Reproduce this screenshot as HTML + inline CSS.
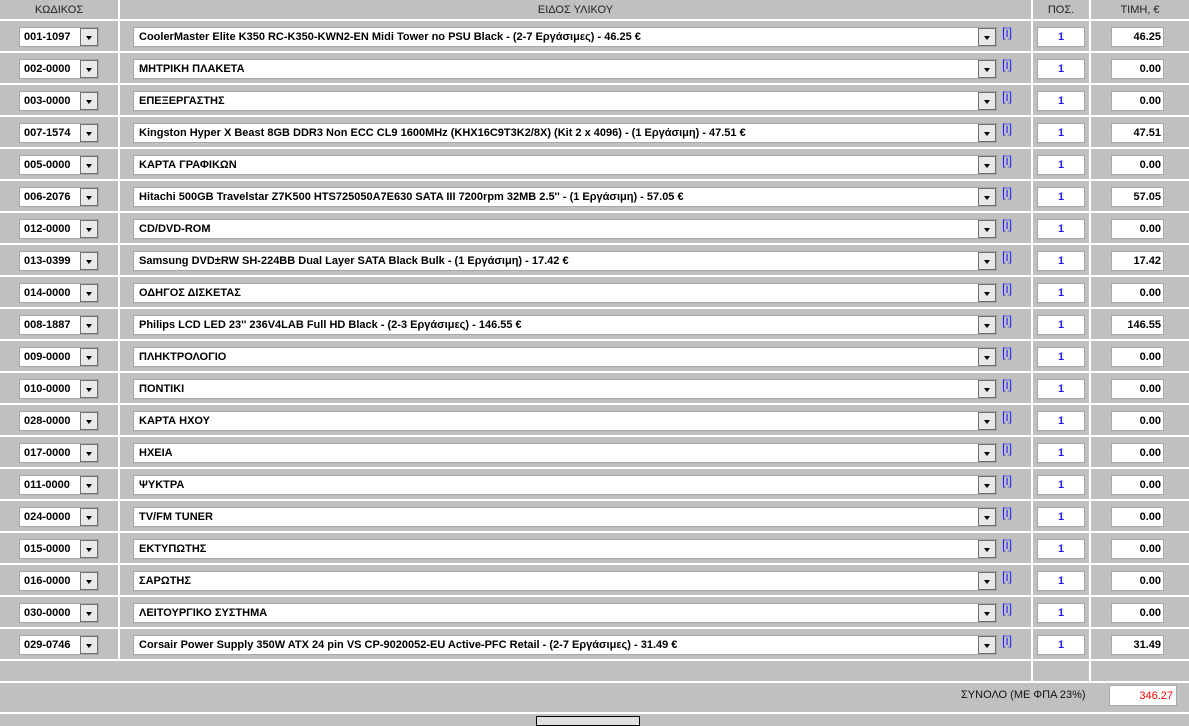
<!DOCTYPE html>
<html><head><meta charset="utf-8">
<style>
*{margin:0;padding:0;box-sizing:border-box}
body{width:1189px;height:719px;background:#c0c0c0;position:relative;overflow:hidden;font-family:"Liberation Sans",Arial,sans-serif;font-size:11px}
.h{position:absolute;background:#fff;height:2px;left:0;width:1189px}
.v{position:absolute;background:#fff;width:2px}
.hd{position:absolute;top:4px;font-size:11px;color:#222;text-align:center}
.row{position:absolute;left:0;width:1189px;height:30px}
.code{position:absolute;left:19px;top:6px;width:80px;height:20px;background:#fff;border:1px solid #a8a8a8;font-weight:bold;padding:3px 0 0 4px}
.btn{position:absolute;right:0;top:0;width:18px;height:18px;border:1px solid #707070;background:#e8e8e8}
.btn:after{content:"";position:absolute;left:5px;top:7px;border-left:3px solid transparent;border-right:3px solid transparent;border-top:4px solid #000}
.desc{position:absolute;left:133px;top:6px;width:864px;height:20px;background:#fff;border:1px solid #a8a8a8;font-weight:bold;padding:3px 0 0 5px;white-space:nowrap;overflow:hidden}
.info{position:absolute;left:1002px;top:4px;color:#2323ff;font-size:13px}
.qty{position:absolute;left:1037px;top:6px;width:48px;height:20px;background:#fff;border:1px solid #a8a8a8;color:#1a1aff;font-weight:bold;text-align:center;padding-top:3px}
.pr{position:absolute;left:1111px;top:6px;width:53px;height:20px;background:#fff;border:1px solid #a8a8a8;font-weight:bold;text-align:right;padding:3px 2px 0 0}
</style></head><body>
<div class="hd" style="left:0;width:118px">ΚΩΔΙΚΟΣ</div>
<div class="hd" style="left:120px;width:911px">ΕΙΔΟΣ ΥΛΙΚΟΥ</div>
<div class="hd" style="left:1033px;width:56px">ΠΟΣ.</div>
<div class="hd" style="left:1091px;width:98px">ΤΙΜΗ, €</div>
<div class="v" style="left:118px;top:0;height:660px"></div>
<div class="v" style="left:1031px;top:0;height:681px"></div>
<div class="v" style="left:1089px;top:0;height:681px"></div>
<div class="h" style="top:19px"></div><div class="h" style="top:51px"></div><div class="h" style="top:83px"></div><div class="h" style="top:115px"></div><div class="h" style="top:147px"></div><div class="h" style="top:179px"></div><div class="h" style="top:211px"></div><div class="h" style="top:243px"></div><div class="h" style="top:275px"></div><div class="h" style="top:307px"></div><div class="h" style="top:339px"></div><div class="h" style="top:371px"></div><div class="h" style="top:403px"></div><div class="h" style="top:435px"></div><div class="h" style="top:467px"></div><div class="h" style="top:499px"></div><div class="h" style="top:531px"></div><div class="h" style="top:563px"></div><div class="h" style="top:595px"></div><div class="h" style="top:627px"></div><div class="h" style="top:659px"></div><div class="h" style="top:681px"></div><div class="h" style="top:712px"></div>

<div class="row" style="top:21px"><div class="code">001-1097<div class="btn"></div></div><div class="desc">CoolerMaster Elite K350 RC-K350-KWN2-EN Midi Tower no PSU Black - (2-7 Εργάσιμες) - 46.25 €<div class="btn"></div></div><div class="info">[i]</div><div class="qty">1</div><div class="pr">46.25</div></div>
<div class="row" style="top:53px"><div class="code">002-0000<div class="btn"></div></div><div class="desc">ΜΗΤΡΙΚΗ ΠΛΑΚΕΤΑ<div class="btn"></div></div><div class="info">[i]</div><div class="qty">1</div><div class="pr">0.00</div></div>
<div class="row" style="top:85px"><div class="code">003-0000<div class="btn"></div></div><div class="desc">ΕΠΕΞΕΡΓΑΣΤΗΣ<div class="btn"></div></div><div class="info">[i]</div><div class="qty">1</div><div class="pr">0.00</div></div>
<div class="row" style="top:117px"><div class="code">007-1574<div class="btn"></div></div><div class="desc">Kingston Hyper X Beast 8GB DDR3 Non ECC CL9 1600MHz (KHX16C9T3K2/8X) (Kit 2 x 4096) - (1 Εργάσιμη) - 47.51 €<div class="btn"></div></div><div class="info">[i]</div><div class="qty">1</div><div class="pr">47.51</div></div>
<div class="row" style="top:149px"><div class="code">005-0000<div class="btn"></div></div><div class="desc">ΚΑΡΤΑ ΓΡΑΦΙΚΩΝ<div class="btn"></div></div><div class="info">[i]</div><div class="qty">1</div><div class="pr">0.00</div></div>
<div class="row" style="top:181px"><div class="code">006-2076<div class="btn"></div></div><div class="desc">Hitachi 500GB Travelstar Z7K500 HTS725050A7E630 SATA III 7200rpm 32MB 2.5'' - (1 Εργάσιμη) - 57.05 €<div class="btn"></div></div><div class="info">[i]</div><div class="qty">1</div><div class="pr">57.05</div></div>
<div class="row" style="top:213px"><div class="code">012-0000<div class="btn"></div></div><div class="desc">CD/DVD-ROM<div class="btn"></div></div><div class="info">[i]</div><div class="qty">1</div><div class="pr">0.00</div></div>
<div class="row" style="top:245px"><div class="code">013-0399<div class="btn"></div></div><div class="desc">Samsung DVD±RW SH-224BB Dual Layer SATA Black Bulk - (1 Εργάσιμη) - 17.42 €<div class="btn"></div></div><div class="info">[i]</div><div class="qty">1</div><div class="pr">17.42</div></div>
<div class="row" style="top:277px"><div class="code">014-0000<div class="btn"></div></div><div class="desc">ΟΔΗΓΟΣ ΔΙΣΚΕΤΑΣ<div class="btn"></div></div><div class="info">[i]</div><div class="qty">1</div><div class="pr">0.00</div></div>
<div class="row" style="top:309px"><div class="code">008-1887<div class="btn"></div></div><div class="desc">Philips LCD LED 23'' 236V4LAB Full HD Black - (2-3 Εργάσιμες) - 146.55 €<div class="btn"></div></div><div class="info">[i]</div><div class="qty">1</div><div class="pr">146.55</div></div>
<div class="row" style="top:341px"><div class="code">009-0000<div class="btn"></div></div><div class="desc">ΠΛΗΚΤΡΟΛΟΓΙΟ<div class="btn"></div></div><div class="info">[i]</div><div class="qty">1</div><div class="pr">0.00</div></div>
<div class="row" style="top:373px"><div class="code">010-0000<div class="btn"></div></div><div class="desc">ΠΟΝΤΙΚΙ<div class="btn"></div></div><div class="info">[i]</div><div class="qty">1</div><div class="pr">0.00</div></div>
<div class="row" style="top:405px"><div class="code">028-0000<div class="btn"></div></div><div class="desc">ΚΑΡΤΑ ΗΧΟΥ<div class="btn"></div></div><div class="info">[i]</div><div class="qty">1</div><div class="pr">0.00</div></div>
<div class="row" style="top:437px"><div class="code">017-0000<div class="btn"></div></div><div class="desc">ΗΧΕΙΑ<div class="btn"></div></div><div class="info">[i]</div><div class="qty">1</div><div class="pr">0.00</div></div>
<div class="row" style="top:469px"><div class="code">011-0000<div class="btn"></div></div><div class="desc">ΨΥΚΤΡΑ<div class="btn"></div></div><div class="info">[i]</div><div class="qty">1</div><div class="pr">0.00</div></div>
<div class="row" style="top:501px"><div class="code">024-0000<div class="btn"></div></div><div class="desc">TV/FM TUNER<div class="btn"></div></div><div class="info">[i]</div><div class="qty">1</div><div class="pr">0.00</div></div>
<div class="row" style="top:533px"><div class="code">015-0000<div class="btn"></div></div><div class="desc">ΕΚΤΥΠΩΤΗΣ<div class="btn"></div></div><div class="info">[i]</div><div class="qty">1</div><div class="pr">0.00</div></div>
<div class="row" style="top:565px"><div class="code">016-0000<div class="btn"></div></div><div class="desc">ΣΑΡΩΤΗΣ<div class="btn"></div></div><div class="info">[i]</div><div class="qty">1</div><div class="pr">0.00</div></div>
<div class="row" style="top:597px"><div class="code">030-0000<div class="btn"></div></div><div class="desc">ΛΕΙΤΟΥΡΓΙΚΟ ΣΥΣΤΗΜΑ<div class="btn"></div></div><div class="info">[i]</div><div class="qty">1</div><div class="pr">0.00</div></div>
<div class="row" style="top:629px"><div class="code">029-0746<div class="btn"></div></div><div class="desc">Corsair Power Supply 350W ATX 24 pin VS CP-9020052-EU Active-PFC Retail - (2-7 Εργάσιμες) - 31.49 €<div class="btn"></div></div><div class="info">[i]</div><div class="qty">1</div><div class="pr">31.49</div></div>

<div style="position:absolute;left:961px;top:689px;font-size:11px;color:#111">ΣΥΝΟΛΟ (ΜΕ ΦΠΑ 23%)</div>
<div style="position:absolute;left:1109px;top:685px;width:68px;height:21px;background:#fff;border:1px solid #a8a8a8;color:#f00;text-align:right;padding:4px 3px 0 0">346.27</div>
<div style="position:absolute;left:536px;top:716px;width:104px;height:10px;border:1px solid #000;background:#e0e0e0"></div>
</body></html>
